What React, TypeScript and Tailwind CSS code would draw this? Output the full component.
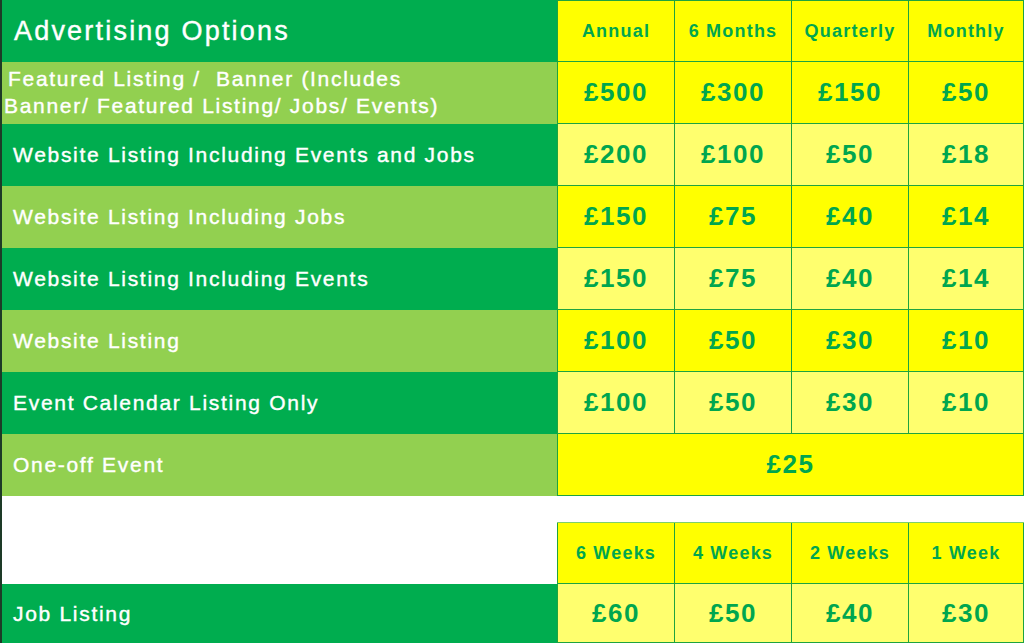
import React from 'react';

type Row = {
    label: React.ReactNode;
    prices: string[];
    shade: 'light' | 'dark';
    pale: boolean;
};

const rows: Row[] = [
    {
        label: (
            <span className="block leading-[27px] -ml-[9px] -mt-[2px]">
                <span className="pl-[4px]">Featured Listing /&nbsp; Banner (Includes</span>
                <br />
                Banner/ Featured Listing/ Jobs/ Events)
            </span>
        ),
        prices: ['£500', '£300', '£150', '£50'],
        shade: 'light',
        pale: false,
    },
    { label: 'Website Listing Including Events and Jobs', prices: ['£200', '£100', '£50', '£18'], shade: 'dark', pale: true },
    { label: 'Website Listing Including Jobs', prices: ['£150', '£75', '£40', '£14'], shade: 'light', pale: false },
    { label: 'Website Listing Including Events', prices: ['£150', '£75', '£40', '£14'], shade: 'dark', pale: true },
    { label: 'Website Listing', prices: ['£100', '£50', '£30', '£10'], shade: 'light', pale: false },
    { label: 'Event Calendar Listing Only', prices: ['£100', '£50', '£30', '£10'], shade: 'dark', pale: true },
];

const widths = ['w-[117px]', 'w-[117px]', 'w-[117px]', 'w-[116px]'];

const Cell = ({ children, pale, i, head }: { children: React.ReactNode; pale: boolean; i: number; head?: boolean }) => (
    <div
        className={`${widths[i]} h-full flex items-center justify-center border-l border-b border-[#1fa33f] ${
            i === 3 ? 'border-r' : ''
        } ${pale ? 'bg-[#ffff6e]' : 'bg-[#ffff00]'} text-[#00a64f] font-bold ${
            head ? 'text-[18px] tracking-[1.2px]' : 'text-[26px] tracking-[1.5px]'
        }`}
    >
        {children}
    </div>
);

const Label = ({ children, shade }: { children: React.ReactNode; shade: 'light' | 'dark' }) => (
    <div
        className={`w-[555px] h-full flex items-center pl-[11px] text-white text-[21px] tracking-[1.7px] [-webkit-text-stroke:0.4px_white] ${
            shade === 'light' ? 'bg-[#92d050]' : 'bg-[#00ad4f]'
        }`}
    >
        {children}
    </div>
);

export default function App() {
    return (
        <div className="w-[1024px] h-[643px] bg-white border-l-2 border-[#1d3a27] font-['Liberation_Sans',Arial,sans-serif] overflow-hidden">
            {/* header */}
            <div className="flex h-[62px]">
                <div className="w-[555px] h-full flex items-center pl-[12px] bg-[#00ad4f] text-white text-[27px] tracking-[2.2px] [-webkit-text-stroke:0.4px_white]">
                    Advertising Options
                </div>
                {['Annual', '6 Months', 'Quarterly', 'Monthly'].map((h, i) => (
                    <div key={h} className="h-full border-t border-[#1fa33f]">
                        <Cell pale={false} i={i} head>
                            {h}
                        </Cell>
                    </div>
                ))}
            </div>

            {rows.map((row, r) => (
                <div key={r} className="flex h-[62px]">
                    <Label shade={row.shade}>{row.label}</Label>
                    {row.prices.map((p, i) => (
                        <Cell key={i} pale={row.pale} i={i}>
                            {p}
                        </Cell>
                    ))}
                </div>
            ))}

            <div className="flex h-[62px]">
                <Label shade="light">One-off Event</Label>
                <div className="w-[467px] h-full flex items-center justify-center border-l border-r border-b border-[#1fa33f] bg-[#ffff00] text-[#00a64f] font-bold text-[26px] tracking-[1.5px]">
                    £25
                </div>
            </div>

            <div className="h-[26px]" />

            <div className="flex h-[62px]">
                <div className="w-[555px] h-full bg-white" />
                <div className="flex h-full border-t border-[#7fcf6a]">
                    {['6 Weeks', '4 Weeks', '2 Weeks', '1 Week'].map((h, i) => (
                        <Cell key={h} pale={false} i={i} head>
                            {h}
                        </Cell>
                    ))}
                </div>
            </div>

            <div className="flex h-[61px] border-b-2 border-[#3c7a52]">
                <Label shade="dark">Job Listing</Label>
                {['£60', '£50', '£40', '£30'].map((p, i) => (
                    <Cell key={i} pale i={i}>
                        {p}
                    </Cell>
                ))}
            </div>
        </div>
    );
}
